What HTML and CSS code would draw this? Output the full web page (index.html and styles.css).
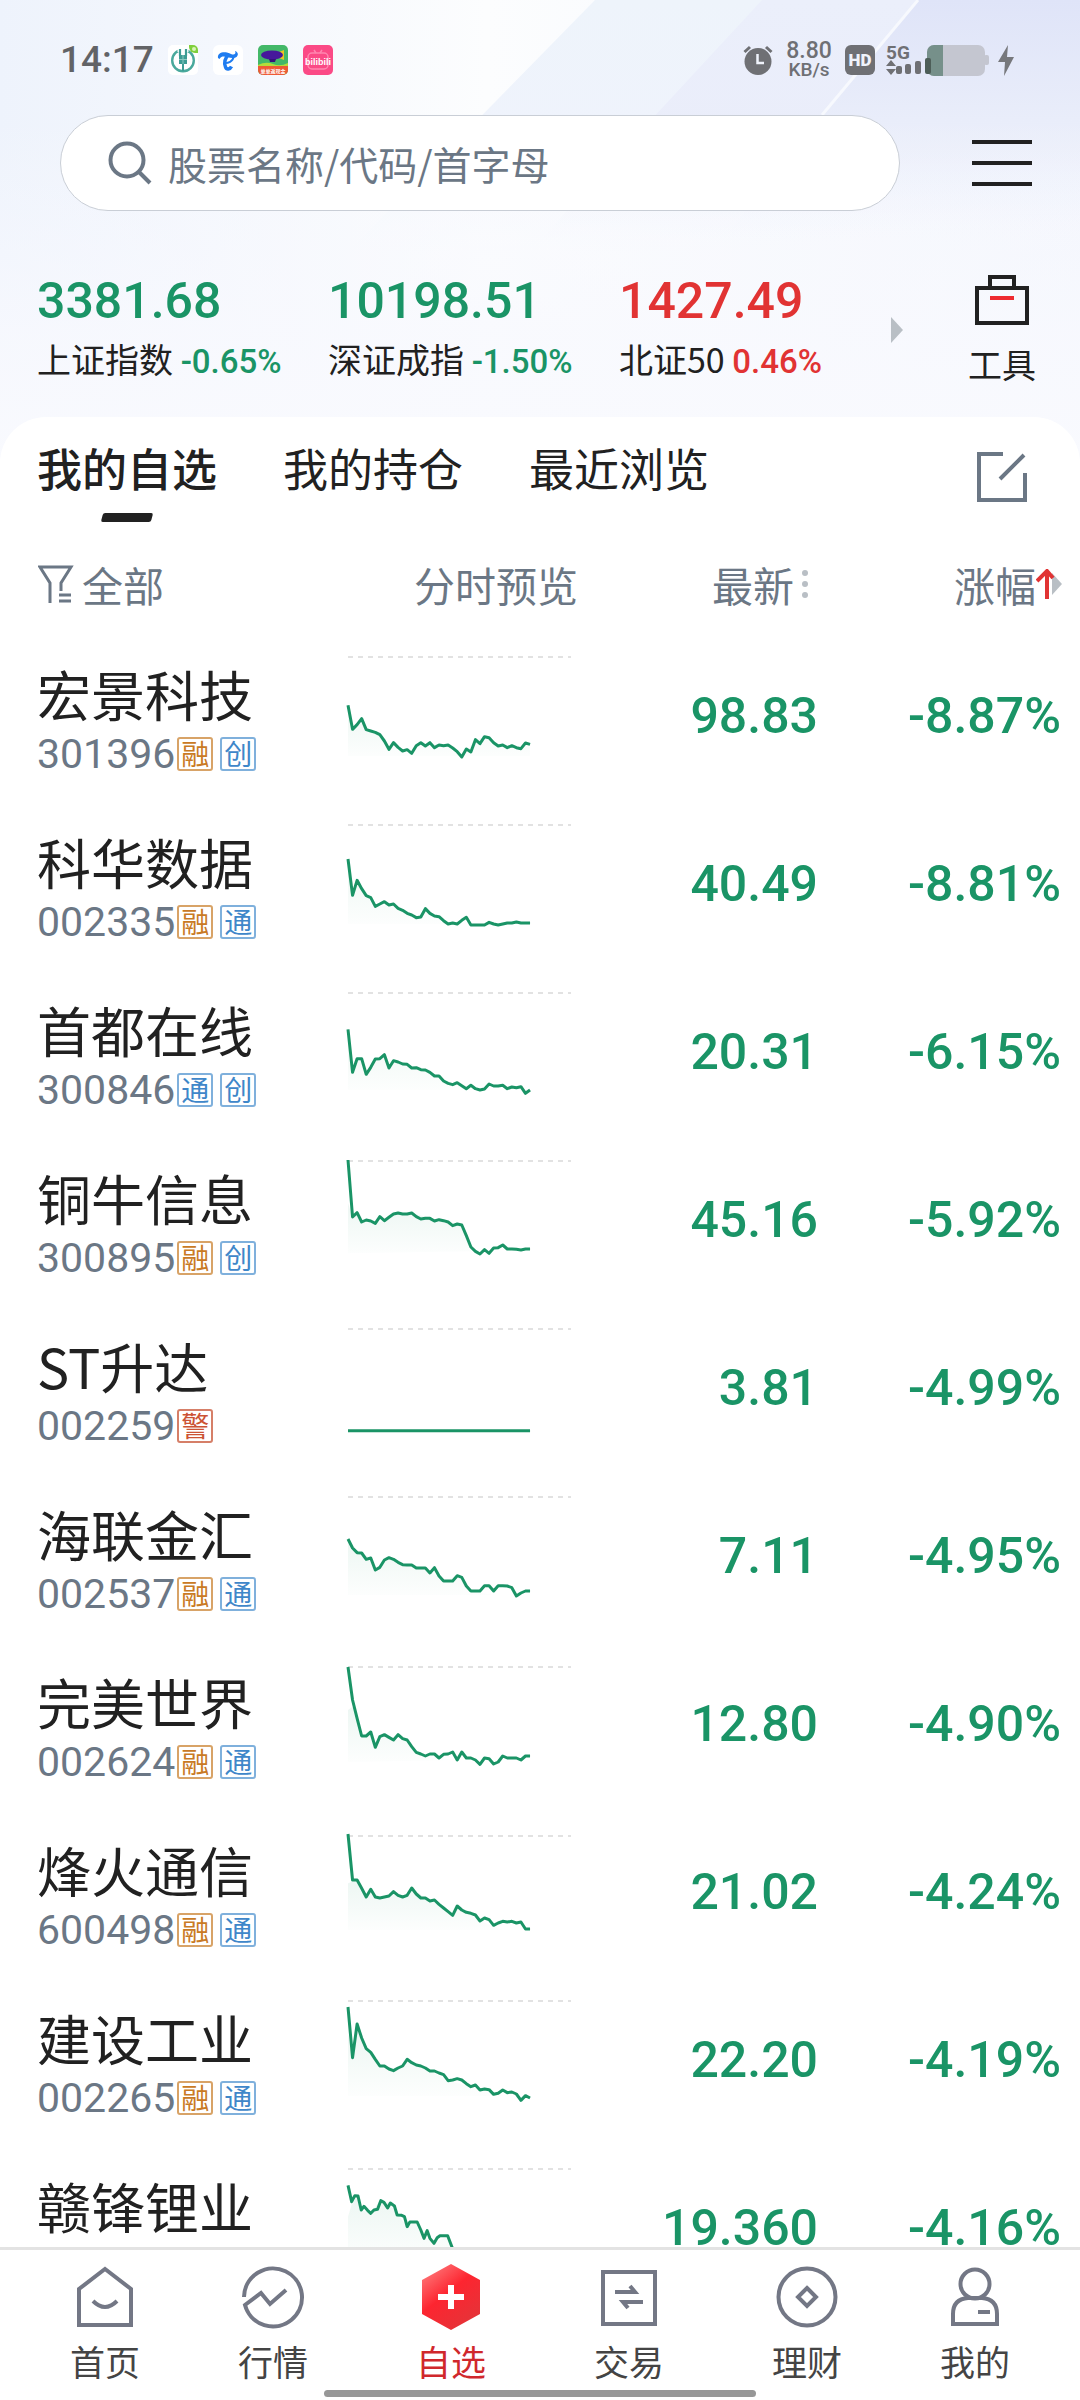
FILE: index.html
```html
<!DOCTYPE html>
<html lang="zh-CN">
<head>
<meta charset="utf-8">
<meta name="viewport" content="width=device-width, initial-scale=1">
<title>我的自选</title>
<link rel="stylesheet" href="styles.css">
</head>
<body>
<div class="app">
  <header class="hero">
    <svg class="hero-bg" viewBox="0 0 1080 470" preserveAspectRatio="none" aria-hidden="true">
      <defs>
        <linearGradient id="base" x1="0" y1="0" x2="1" y2="0">
          <stop offset="0" stop-color="#eef3fc"/><stop offset=".2" stop-color="#f4f7fd"/><stop offset=".45" stop-color="#fcfdfe"/><stop offset="1" stop-color="#f3f6fd"/>
        </linearGradient>
        <linearGradient id="band1" x1="0" y1="0" x2="0" y2="1">
          <stop offset="0" stop-color="#eef4fb"/><stop offset=".5" stop-color="#eff3fc"/><stop offset="1" stop-color="#f7f9fe" stop-opacity="0"/>
        </linearGradient>
        <linearGradient id="band2" x1="0" y1="0" x2="0" y2="1">
          <stop offset="0" stop-color="#ebeffb"/><stop offset=".6" stop-color="#eaedfa"/><stop offset="1" stop-color="#f3f5fd" stop-opacity="0"/>
        </linearGradient>
        <linearGradient id="band3" x1="0" y1="0" x2="0" y2="1">
          <stop offset="0" stop-color="#dfe4f8"/><stop offset=".5" stop-color="#e9edfa"/><stop offset="1" stop-color="#f3f6fd" stop-opacity="0"/>
        </linearGradient>
        <linearGradient id="fade" x1="0" y1="0" x2="0" y2="1">
          <stop offset="0" stop-color="#f8f9fe" stop-opacity="0"/><stop offset=".6" stop-color="#f8f9fe" stop-opacity=".8"/><stop offset="1" stop-color="#f9fafe"/>
        </linearGradient>
      </defs>
      <rect width="1080" height="470" fill="url(#base)"/>
      <path d="M595 0H1080V260H340Z" fill="url(#band1)"/>
      <path d="M762 0H1080V240H540Z" fill="url(#band2)"/>
      <path d="M918 0H1080V240H722Z" fill="url(#band3)"/>
      <path d="M918 0L822 115" stroke="#f7f9fe" stroke-width="3"/>
      <rect width="1080" height="350" y="120" fill="url(#fade)"/>
    </svg>

    <div class="status">
      <div class="status-left">
        <time class="clock">14:17</time>
        <svg class="app-icon" viewBox="0 0 30 30" aria-hidden="true">
          <rect width="30" height="30" rx="5" fill="#fff"/>
          <circle cx="15" cy="15.500" r="10.800" fill="none" stroke="#49a99c" stroke-width="2.400"/>
          <path d="M9.500 3H20.500V7H9.500Z" fill="#fff"/>
          <path d="M12 4V11M18 4V11" stroke="#3d9c94" stroke-width="2.200"/>
          <path d="M11 10H19V19H11Z" fill="#3d9c94"/>
          <path d="M15 10V26" stroke="#3d9c94" stroke-width="2"/>
          <path d="M11 14.500H19M15 10V19" stroke="#8cc9c2" stroke-width="1"/>
          <path d="M21 0H25A5 5 0 0 1 30 5V8H27A6 6 0 0 1 21 2Z" fill="#7fcf3c"/>
          <circle cx="26" cy="4" r="2" fill="#d8f3b8"/>
        </svg>
        <svg class="app-icon" viewBox="0 0 30 30" aria-hidden="true">
          <rect width="30" height="30" rx="6" fill="#fff"/>
          <path d="M5 13C4 7 12 5.500 18 9C21 10.500 23.500 9 22 6C26 7 26 12 21 13C15 14 10 8.500 6.500 14Z" fill="#1f7cf0"/>
          <path d="M16 9C12 13 11 18 12.500 22C13.500 25 17 24.500 18.500 21.500" fill="none" stroke="#1f7cf0" stroke-width="3.500"/>
          <path d="M11 18C15 18.500 20 16.500 20.500 12" fill="none" stroke="#1f7cf0" stroke-width="2"/>
        </svg>
        <svg class="app-icon" viewBox="0 0 30 30" aria-hidden="true">
          <rect width="30" height="30" rx="5" fill="#43b868"/>
          <path d="M0 20Q8 16 15 19T30 18V23H0Z" fill="#b4dc3b"/>
          <path d="M21 7L26 5L26 10L26 15L21 13Z" fill="#f2c320"/>
          <ellipse cx="14" cy="10" rx="11" ry="4.500" fill="#46189b"/>
          <path d="M11 14H18L17 17H12Z" fill="#34127a"/>
          <path d="M0 21H30V25A5 5 0 0 1 25 30H5A5 5 0 0 1 0 25Z" fill="#ee5a35"/>
          <text x="15" y="28" class="icon-text icon-text-cn">单单返现金</text>
        </svg>
        <svg class="app-icon" viewBox="0 0 30 30" aria-hidden="true">
          <rect width="30" height="30" rx="5" fill="#fb4a86"/>
          <path d="M11 5L13 8M19 5L17 8" stroke="#ff86b0" stroke-width="1.500"/>
          <rect x="5" y="8" width="20" height="16" rx="4" fill="none" stroke="#ff86b0" stroke-width="1.500"/>
          <text x="15" y="20" class="icon-text">bilibili</text>
        </svg>
      </div>
      <div class="status-right">
        <svg width="30" height="30" viewBox="0 0 30 30" aria-hidden="true">
          <circle cx="15" cy="16.500" r="13.500" fill="#6f7074"/>
          <path d="M1.500 7L7 2M28.500 7L23 2" stroke="#6f7074" stroke-width="3"/>
          <path d="M14.500 9V18H21" fill="none" stroke="#f0f3fb" stroke-width="2.500"/>
        </svg>
        <div class="speed"><b>8.80</b><span>KB/s</span></div>
        <span class="hd">HD</span>
        <svg class="power" width="130" height="32" viewBox="0 0 130 32" aria-hidden="true">
          <text x="0" y="15" class="net-text">5G</text>
          <path d="M0 22L5 16L10 22ZM0 25L5 31L10 25Z" fill="#6f7074"/>
          <rect x="41" y="1" width="58" height="31" rx="7" fill="#c4c6d0"/>
          <rect x="98" y="11" width="5" height="10" rx="2" fill="#c4c6d0"/>
          <path d="M57 1H48A7 7 0 0 0 41 8V25A7 7 0 0 0 48 32H57Z" fill="#76908a"/>
          <g fill="#6f7074"><rect x="10" y="22" width="6" height="8" rx="2"/><rect x="19" y="20" width="6" height="10" rx="2"/><rect x="29" y="17" width="6" height="13" rx="2"/></g>
          <rect x="39" y="14" width="6" height="16" rx="2" fill="#4d5e58"/>
          <path d="M122 1L112 18H119L118 32L128 13H121Z" fill="#77787c"/>
        </svg>
      </div>
    </div>

    <form class="search-row" role="search">
      <label class="search">
        <svg width="44" height="44" viewBox="0 0 44 44" fill="none" stroke="#6b7785" stroke-width="4" aria-hidden="true"><circle cx="19" cy="19" r="16.500"/><path d="M31 31L42 42"/></svg>
        <input class="search-input" type="text" placeholder="股票名称/代码/首字母" aria-label="股票名称/代码/首字母">
      </label>
      <button class="icon-btn" type="button" aria-label="菜单">
        <svg width="60" height="48" viewBox="0 0 60 48" aria-hidden="true"><path d="M0 3H60M0 24H60M0 45H60" stroke="#212121" stroke-width="4"/></svg>
      </button>
    </form>

    <div class="indices">
      <div class="index-list">
        <a class="index down" href="#sh"><strong>3381.68</strong><span class="index-name">上证指数 <em>-0.65%</em></span></a>
        <a class="index down" href="#sz"><strong>10198.51</strong><span class="index-name">深证成指 <em>-1.50%</em></span></a>
        <a class="index up" href="#bz"><strong>1427.49</strong><span class="index-name">北证50 <em>0.46%</em></span></a>
      </div>
      <svg class="more" width="12" height="26" viewBox="0 0 12 26" aria-hidden="true"><path d="M0 0L12 13L0 26Z" fill="#b9bfc5"/></svg>
      <button class="tools" type="button">
        <svg width="54" height="50" viewBox="0 0 54 50" fill="none" aria-hidden="true"><path d="M2 13H52V48H2ZM15 13V2H39V13" stroke="#212121" stroke-width="4"/><path d="M15 23H39" stroke="#ee2b30" stroke-width="4"/></svg>
        <span>工具</span>
      </button>
    </div>
  </header>

  <main class="panel">
    <div class="tabs">
      <button class="tab active" type="button">我的自选</button>
      <button class="tab" type="button">我的持仓</button>
      <button class="tab" type="button">最近浏览</button>
      <button class="icon-btn edit" type="button" aria-label="编辑">
        <svg width="50" height="50" viewBox="0 0 50 50" fill="none" stroke="#6b7785" stroke-width="4" aria-hidden="true"><path d="M26 2H2V48H48V21M47 3L23 27"/></svg>
      </button>
    </div>

    <table class="stocks">
      <colgroup><col class="c-name"><col class="c-chart"><col class="c-price"><col class="c-change"></colgroup>
      <thead>
        <tr>
          <th><button class="th-btn" type="button"><svg width="36" height="38" viewBox="0 0 36 38" fill="none" stroke="#6b7785" stroke-width="3" aria-hidden="true"><path d="M12 38V18L2 2H33L23 18V26M21 30H33M21 36H33"/></svg><span class="all">全部</span></button></th>
          <th class="th-chart">分时预览</th>
          <th><button class="th-btn end" type="button">最新<svg width="24" height="30" viewBox="0 0 24 30" fill="#b9bfc5" aria-hidden="true"><circle cx="11" cy="4" r="3"/><circle cx="11" cy="15" r="3"/><circle cx="11" cy="26" r="3"/></svg></button></th>
          <th><button class="th-btn end" type="button">涨幅<svg width="26" height="30" viewBox="0 0 26 30" fill="none" aria-hidden="true"><path d="M16 4L26 15L16 26Z" fill="#b9bfc5"/><path d="M11 30V3M1 12L11 2L17 9" stroke="#e13333" stroke-width="4"/></svg></button></th>
        </tr>
      </thead>
      <tbody>
        <tr>
          <td><div class="name">宏景科技</div><div class="meta"><span class="code">301396</span><i class="tag rong">融</i><i class="tag">创</i></div></td>
          <td><svg class="spark" viewBox="0 3 49 504" preserveAspectRatio="none"><path class="ref" d="M0 81H49"/><polygon points="0,226 1,298 2,284 3,266 4,299 5,303 6,307 7,314 8,333 9,358 10,338 12,363 14,370 16,338 20,345 22,345 25,381 28,329 30,320 33,348 38,356 40,343 40,378 0,378"/><polyline points="0,226 1,298 2,284 3,266 4,299 5,303 6,307 7,314 8,333 9,358 10,338 11,352 12,363 13,359 14,370 15,347 16,338 17,348 18,338 19,353 20,345 21,347 22,345 23,354 24,365 25,381 26,357 27,366 28,329 29,341 30,320 31,323 32,338 33,348 34,345 35,353 36,347 37,353 38,356 39,339 40,343"/></svg></td>
          <td class="num">98.83</td><td class="num">-8.87%</td>
        </tr>
        <tr>
          <td><div class="name">科华数据</div><div class="meta"><span class="code">002335</span><i class="tag rong">融</i><i class="tag">通</i></div></td>
          <td><svg class="spark" viewBox="0 507 49 504" preserveAspectRatio="none"><path class="ref" d="M0 585H49"/><polygon points="0,687 1,796 2,751 3,776 4,797 6,829 9,825 12,841 15,863 17,836 22,882 0,882"/><polyline points="0,687 1,796 2,751 3,776 4,797 5,803 6,829 7,822 8,815 9,825 10,822 11,835 12,841 13,850 14,855 15,863 16,861 17,836 18,850 19,858 20,860 21,872 22,882 23,879 24,882 25,871 26,862 27,885 28,885 29,885 30,885 31,877 32,882 33,885 34,882 35,879 36,879 37,876 38,879 39,879 40,879"/></svg></td>
          <td class="num">40.49</td><td class="num">-8.81%</td>
        </tr>
        <tr>
          <td><div class="name">首都在线</div><div class="meta"><span class="code">300846</span><i class="tag">通</i><i class="tag">创</i></div></td>
          <td><svg class="spark" viewBox="0 21 49 504" preserveAspectRatio="none"><path class="ref" d="M0 99H49"/><polygon points="0,208 1,337 2,296 3,296 4,343 6,297 8,284 9,324 10,302 14,324 18,337 22,370 28,390 0,390"/><polyline points="0,208 1,337 2,296 3,296 4,343 5,322 6,297 7,296 8,284 9,324 10,302 11,306 12,312 13,313 14,324 15,323 16,329 17,330 18,337 19,348 20,348 21,363 22,370 23,374 24,368 25,377 26,386 27,376 28,386 29,390 30,387 31,372 32,378 33,378 34,376 35,386 36,381 37,383 38,380 39,400 40,390"/></svg></td>
          <td class="num">20.31</td><td class="num">-6.15%</td>
        </tr>
        <tr>
          <td><div class="name">铜牛信息</div><div class="meta"><span class="code">300895</span><i class="tag rong">融</i><i class="tag">创</i></div></td>
          <td><svg class="spark" viewBox="0 525 49 504" preserveAspectRatio="none"><path class="ref" d="M0 603H49"/><polygon points="0,730 1,771 2,758 3,786 6,790 8,782 11,759 14,759 18,775 22,786 25,795 28,874 0,880"/><polyline points="0,600 1,771 2,758 3,786 4,780 5,783 6,790 7,770 8,782 9,772 10,762 11,759 12,762 13,762 14,759 15,770 16,777 17,775 18,775 19,783 20,779 21,782 22,786 23,797 24,792 25,795 26,827 27,861 28,874 29,882 30,869 31,880 32,864 33,863 34,855 35,867 36,867 37,868 38,870 39,867 40,867"/></svg></td>
          <td class="num">45.16</td><td class="num">-5.92%</td>
        </tr>
        <tr>
          <td><div class="name">ST升达</div><div class="meta"><span class="code">002259</span><i class="tag warn">警</i></div></td>
          <td><svg class="spark" viewBox="0 9 49 504" preserveAspectRatio="none"><path class="ref" d="M0 87H49"/><polyline points="0,392 40,392"/></svg></td>
          <td class="num">3.81</td><td class="num">-4.99%</td>
        </tr>
        <tr>
          <td><div class="name">海联金汇</div><div class="meta"><span class="code">002537</span><i class="tag rong">融</i><i class="tag">通</i></div></td>
          <td><svg class="spark" viewBox="0 513 49 504" preserveAspectRatio="none"><path class="ref" d="M0 591H49"/><polygon points="0,717 1,744 3,759 5,774 6,810 9,773 12,794 17,804 21,843 24,827 27,873 32,885 0,885"/><polyline points="0,717 1,744 2,758 3,759 4,778 5,774 6,810 7,802 8,780 9,773 10,778 11,787 12,794 13,795 14,795 15,804 16,804 17,804 18,819 19,803 20,828 21,843 22,843 23,843 24,827 25,832 26,858 27,873 28,873 29,873 30,857 31,857 32,873 33,857 34,857 35,858 36,863 37,888 38,879 39,873 40,873"/></svg></td>
          <td class="num">7.11</td><td class="num">-4.95%</td>
        </tr>
        <tr>
          <td><div class="name">完美世界</div><div class="meta"><span class="code">002624</span><i class="tag rong">融</i><i class="tag">通</i></div></td>
          <td><svg class="spark" viewBox="0 -3 49 504" preserveAspectRatio="none"><path class="ref" d="M0 81H49"/><polygon points="0,210 1,200 2,235 3,288 5,276 6,322 8,284 10,300 13,300 15,337 20,354 24,360 0,366"/><polyline points="0,81 1,180 2,235 3,288 4,288 5,276 6,322 7,290 8,284 9,292 10,300 11,284 12,296 13,300 14,320 15,337 16,342 17,348 18,342 19,342 20,354 21,343 22,342 23,336 24,360 25,336 26,354 27,354 28,360 29,373 30,354 31,356 32,372 33,366 34,348 35,354 36,354 37,354 38,360 39,348 40,348"/></svg></td>
          <td class="num">12.80</td><td class="num">-4.90%</td>
        </tr>
        <tr>
          <td><div class="name">烽火通信</div><div class="meta"><span class="code">600498</span><i class="tag rong">融</i><i class="tag">通</i></div></td>
          <td><svg class="spark" viewBox="0 501 49 504" preserveAspectRatio="none"><path class="ref" d="M0 588H49"/><polygon points="0,730 2,720 4,771 5,748 7,774 10,755 12,771 14,744 17,774 20,793 23,826 24,798 29,843 34,870 0,870"/><polyline points="0,582 1,720 2,720 3,745 4,771 5,748 6,771 7,774 8,771 9,768 10,755 11,766 12,771 13,766 14,744 15,762 16,774 17,774 18,783 19,780 20,793 21,804 22,815 23,826 24,798 25,810 26,817 27,820 28,825 29,843 30,834 31,839 32,856 33,849 34,844 35,846 36,844 37,849 38,846 39,867 40,867"/></svg></td>
          <td class="num">21.02</td><td class="num">-4.24%</td>
        </tr>
        <tr>
          <td><div class="name">建设工业</div><div class="meta"><span class="code">002265</span><i class="tag rong">融</i><i class="tag">通</i></div></td>
          <td><svg class="spark" viewBox="0 15 49 504" preserveAspectRatio="none"><path class="ref" d="M0 93H49"/><polygon points="0,190 1,263 2,180 4,236 7,288 10,302 13,268 18,303 22,332 27,350 34,378 0,378"/><polyline points="0,111 1,263 2,162 3,204 4,236 5,247 6,268 7,288 8,288 9,297 10,302 11,294 12,288 13,268 14,278 15,285 16,288 17,294 18,303 19,303 20,309 21,314 22,332 23,330 24,326 25,330 26,341 27,350 28,345 29,360 30,357 31,359 32,373 33,370 34,360 35,368 36,366 37,372 38,391 39,377 40,384"/></svg></td>
          <td class="num">22.20</td><td class="num">-4.19%</td>
        </tr>
        <tr>
          <td><div class="name">赣锋锂业</div><div class="meta"></div></td>
          <td><svg class="spark" viewBox="0 519 49 504" preserveAspectRatio="none"><path class="ref" d="M0 597H49"/><polygon points="0,740 1,695 2,678 3,720 5,730 7,692 9,699 11,735 13,770 15,756 17,805 19,820 22,797 24,870 0,870"/><polyline points="0,646 .8,695 1.5,677 2.2,678 2.9,720 3.5,709 4.3,721 5,730 5.7,720 6.5,718 7.2,692 7.900,697 8.7,714 9.3,699 10.2,708 10.8,735 11.8,736 12.4,740 13,770 13.6,756 15.2,756 16,780 16.7,805 17.4,782 18,805 18.9,820 19.6,803 20.2,797 21.9,797 22.9,833 24,850 27,862 31,858 35,870 40,874"/></svg></td>
          <td class="num">19.360</td><td class="num">-4.16%</td>
        </tr>
      </tbody>
    </table>
  </main>

  <nav class="nav">
    <a href="#home"><svg width="62" height="66" viewBox="0 0 62 66" class="line" aria-hidden="true"><path d="M5 61V25L31 5L57 25V61Z"/><path d="M19 37Q31 49 43 37"/></svg><span>首页</span></a>
    <a href="#market"><svg width="66" height="66" viewBox="0 0 66 66" class="line" aria-hidden="true"><path d="M4 33A29 29 0 1 1 5 41L21 29L30 40L46 26"/></svg><span>行情</span></a>
    <a href="#watch" class="current"><svg width="60" height="66" viewBox="0 0 60 66" aria-hidden="true"><defs><linearGradient id="hex" x1="0" y1="0" x2=".7" y2="1"><stop offset="0" stop-color="#ff8a8a"/><stop offset=".5" stop-color="#fd2530"/><stop offset="1" stop-color="#e53338"/></linearGradient></defs><path d="M30 0L59 16V50L30 66L1 50V16Z" fill="url(#hex)"/><path d="M30 21V45M17 33H43" stroke="#fff" stroke-width="6"/></svg><span>自选</span></a>
    <a href="#trade"><svg width="60" height="66" viewBox="0 0 60 66" class="line" aria-hidden="true"><rect x="4" y="8" width="52" height="52"/><path d="M16 28H36L31 22M44 38H24L29 44"/></svg><span>交易</span></a>
    <a href="#wealth"><svg width="66" height="66" viewBox="0 0 66 66" class="line" aria-hidden="true"><circle cx="33" cy="33" r="28.500"/><path d="M33 24L42 33L33 42L24 33Z"/></svg><span>理财</span></a>
    <a href="#me"><svg width="60" height="66" viewBox="0 0 60 66" class="line" aria-hidden="true"><circle cx="30" cy="20" r="14.500"/><path d="M8 60V50Q8 35 23 34H37Q52 35 52 50V60ZM33 48H45"/></svg><span>我的</span></a>
    <i class="home-bar"></i>
  </nav>
  <svg class="defs" width="0" height="0" aria-hidden="true"><defs><linearGradient id="area" x1="0" y1="0" x2="0" y2="1"><stop offset="0" stop-color="#1a9466" stop-opacity=".08"/><stop offset="1" stop-color="#1a9466" stop-opacity=".01"/></linearGradient></defs></svg>
</div>
</body>
</html>
```
FILE: styles.css
```css
:root {
  --ink: #212121;
  --muted: #6b7785;
  --green: #1a9466;
  --red: #e13333;
  --latin: Roboto, "Noto Sans CJK SC", sans-serif;
}

* { box-sizing: border-box; }

body {
  margin: 0;
  background: #fff;
  color: var(--ink);
  font-family: "Noto Sans CJK SC", sans-serif;
}

button {
  padding: 0;
  border: 0;
  background: none;
  color: inherit;
  font: inherit;
}

a { color: inherit; text-decoration: none; }
svg { display: block; flex: none; }
i, em { font-style: normal; }

.app {
  display: flex;
  flex-direction: column;
  height: 100vh;
  overflow: hidden;
}

/* header */
.hero { position: relative; flex: none; height: 417px; }
.hero-bg { position: absolute; top: 0; left: 0; width: 100%; height: 470px; }
.hero > :not(.hero-bg) { position: relative; }

.status {
  display: flex;
  justify-content: space-between;
  align-items: center;
  height: 115px;
  padding: 5px 64px 0 60px;
}
.status-left, .status-right { display: flex; align-items: center; }
.status-left { gap: 15px; }
.clock {
  width: 93px;
  color: #626366;
  font: 500 37px/44px var(--latin);
}
.app-icon { width: 30px; height: 30px; }
.icon-text {
  fill: #fff;
  font: 700 9px "Liberation Sans", sans-serif;
  text-anchor: middle;
}
.icon-text-cn { font: 700 5px "Noto Sans CJK SC", sans-serif; }
.speed {
  display: flex;
  flex-direction: column;
  align-items: center;
  width: 72px;
  color: #6f7074;
  font: 500 19px/18px var(--latin);
}
.speed b { font: 500 23px/20px var(--latin); }
.hd {
  width: 30px;
  height: 30px;
  margin-right: 11px;
  border-radius: 6px;
  background: #6f7074;
  color: #f0f3fb;
  font: 900 17px/31px var(--latin);
  text-align: center;
}
.power { overflow: visible; }
.net-text { fill: #6f7074; font: 700 19px Roboto, sans-serif; }

.search-row {
  display: flex;
  align-items: center;
  justify-content: space-between;
  padding: 0 48px 0 60px;
}
.search {
  display: flex;
  align-items: center;
  gap: 16px;
  flex: 1;
  height: 96px;
  margin-right: 72px;
  padding-left: 47px;
  border: 1px solid #c9ced6;
  border-radius: 48px;
  background: #fff;
}
.search-input {
  flex: 1;
  min-width: 0;
  padding: 0;
  border: 0;
  outline: 0;
  background: none;
  color: var(--ink);
  font: 400 39px/56px "Noto Sans CJK SC", sans-serif;
}
.search-input::placeholder { color: var(--muted); opacity: 1; }

.indices {
  display: flex;
  align-items: flex-start;
  padding: 60px 42px 0 37px;
}
.index-list {
  display: grid;
  grid-template-columns: repeat(3, 1fr);
  flex: 1;
  max-width: 873px;
}
.index { display: flex; flex-direction: column; white-space: nowrap; }
.index strong { font: 500 50px/60px var(--latin); }
.index-name { color: var(--ink); font-size: 34px; line-height: 56px; }
.index em { font: 500 33px/56px var(--latin); }
.down strong, .down em { color: var(--green); }
.up strong, .up em { color: var(--red); }
.more { margin: 46px 0 0 -19px; }
.tools {
  display: flex;
  flex-direction: column;
  align-items: center;
  gap: 13px;
  width: 72px;
  margin-left: auto;
  padding-top: 4px;
  font-size: 34px;
  line-height: 52px;
}

/* list panel */
.panel {
  position: relative;
  flex: 1;
  min-height: 0;
  overflow: hidden;
  border-radius: 46px 46px 0 0;
  background: #fff;
}
.tabs {
  display: flex;
  align-items: flex-start;
  gap: 66px;
  height: 125px;
  padding: 18px 53px 0 37px;
}
.tab {
  display: flex;
  flex-direction: column;
  align-items: center;
  font-size: 45px;
  line-height: 66px;
}
.tab.active { font-weight: 500; }
.tab.active::after {
  content: "";
  width: 50px;
  height: 9px;
  margin-top: 12px;
  border-radius: 2px;
  background: var(--ink);
  transform: skewX(-15deg);
}
.edit { margin: 17px 0 0 auto; }

.stocks {
  width: 100%;
  border-collapse: collapse;
  table-layout: fixed;
}
.c-name { width: 348px; }
.c-chart { width: 230px; }
.c-price { width: 240px; }
.stocks th {
  height: 89px;
  padding: 0 0 6px;
  color: var(--muted);
  font-size: 41px;
  font-weight: 400;
  line-height: 60px;
  text-align: right;
}
.stocks th:first-child { padding-left: 38px; }
.stocks th:last-child { padding-right: 18px; }
.th-btn { display: flex; align-items: center; gap: 8px; }
.th-btn.end { gap: 0; margin-left: auto; }
.stocks td { height: 168px; padding: 0; vertical-align: middle; }
.stocks td:first-child { padding: 6px 0 0 37px; }
.stocks td:last-child { padding-right: 19px; }
.stocks td.num { padding-top: 2px; }

.name { font-size: 54px; line-height: 72px; white-space: nowrap; }
.meta { display: flex; align-items: center; height: 48px; }
.code {
  color: var(--muted);
  font: 400 41px/48px var(--latin);
  margin-right: 2px;
}
.tag {
  width: 36px;
  height: 34px;
  margin-right: 7px;
  border: 2px solid #7fb0dc;
  border-radius: 3px;
  color: #3f87c9;
  font-size: 28px;
  line-height: 29px;
  text-align: center;
}
.tag.rong { border-color: #d8a367; color: #c97a24; }
.tag.warn { border-color: #d67f68; color: #cc5334; }
.num {
  color: var(--green);
  font: 500 50px/60px var(--latin);
  text-align: right;
}

.spark { width: 223px; height: 168px; overflow: visible; }
.spark polyline {
  fill: none;
  stroke: var(--green);
  stroke-width: 3px;
  stroke-linejoin: round;
  vector-effect: non-scaling-stroke;
}
.spark polygon { fill: url(#area); }
.ref {
  fill: none;
  stroke: #e2e2e2;
  stroke-width: 2px;
  stroke-dasharray: 5 5;
  vector-effect: non-scaling-stroke;
}

/* bottom navigation */
.nav {
  position: relative;
  display: grid;
  grid-template-columns: 158fr 178fr 178fr 178fr 178fr 158fr;
  flex: none;
  height: 153px;
  padding: 14px 26px 0;
  border-top: 3px solid #e3e3e3;
  background: #fff;
}
.nav a {
  display: flex;
  flex-direction: column;
  align-items: center;
  gap: 5px;
  color: #444;
  font-size: 35px;
  line-height: 52px;
}
.nav a.current { color: #d0282c; }
.line { fill: none; stroke: #737785; stroke-width: 4px; }
.home-bar {
  position: absolute;
  bottom: 3px;
  left: 30%;
  width: 40%;
  height: 7px;
  border-radius: 4px;
  background: #979797;
}
.defs { position: absolute; }
```
